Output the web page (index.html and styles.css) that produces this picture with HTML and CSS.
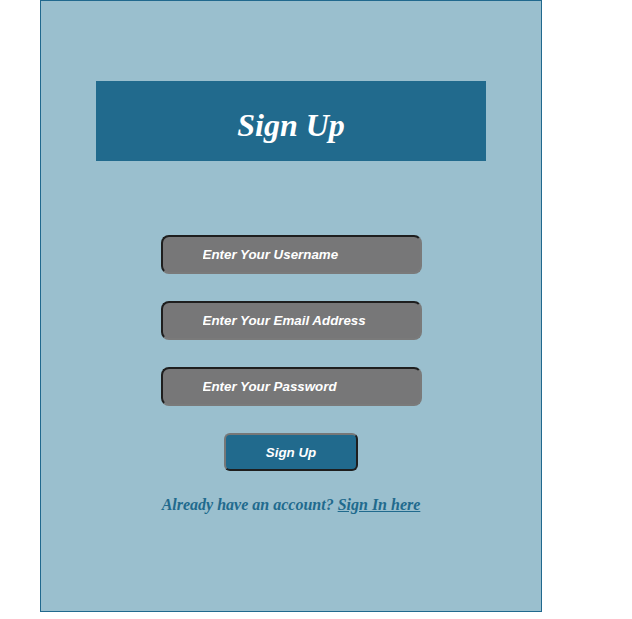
FILE: index.html
```html
<!DOCTYPE html>
<html>
<head>
<meta charset="utf-8">
<link rel="stylesheet" href="styles.css">
</head>
<body>
<div class="card">
  <div class="header"><h1 class="title">Sign Up</h1></div>
  <form class="form">
    <input class="field" type="text" placeholder="Enter Your Username">
    <input class="field" type="email" placeholder="Enter Your Email Address">
    <input class="field" type="password" placeholder="Enter Your Password">
    <button class="btn" type="button">Sign Up</button>
    <p class="note">Already have an account? <a class="link" href="#">Sign In here</a></p>
  </form>
</div>
</body>
</html>
```
FILE: styles.css
```css
html, body { margin: 0; padding: 0; background: #fff; }
.card {
  margin-left: 40px;
  width: 500px;
  height: 610px;
  border: 1px solid #21698e;
  background: #9abfce;
  display: flex;
  flex-direction: column;
  align-items: center;
}
.header {
  box-sizing: border-box;
  margin-top: 80px;
  width: 390px;
  height: 80px;
  padding-top: 8px;
  background: #216a8d;
  display: flex;
  align-items: center;
  justify-content: center;
}
.title {
  margin: 0;
  color: #fff;
  font-family: "Liberation Serif", serif;
  font-style: italic;
  font-weight: bold;
  font-size: 32px;
}
.form {
  margin-top: 74px;
  display: flex;
  flex-direction: column;
  align-items: center;
}
.field {
  box-sizing: border-box;
  width: 261px;
  height: 39px;
  margin-bottom: 27px;
  border: 2px solid;
  border-color: #1e1e1e #7a7a7a #7a7a7a #1e1e1e;
  border-radius: 8px;
  background: #777778;
  padding: 0 0 0 40px;
  color: #fff;
  font-family: "Liberation Sans", Arial, sans-serif;
  font-style: italic;
  font-weight: bold;
  font-size: 13.33px;
  outline: none;
}
.field::placeholder { color: #fff; opacity: 1; }
.btn {
  box-sizing: border-box;
  width: 134px;
  height: 38px;
  border: 2px solid;
  border-color: #777 #1e1e1e #1e1e1e #777;
  border-radius: 6px;
  background: #216a8d;
  color: #fff;
  font-family: "Liberation Sans", Arial, sans-serif;
  font-style: italic;
  font-weight: bold;
  font-size: 13.33px;
}
.note {
  margin: 25px 0 0;
  color: #216a8d;
  font-family: "Liberation Serif", serif;
  font-style: italic;
  font-weight: bold;
  font-size: 16px;
}
.link { color: #216a8d; text-decoration: underline; }
```
